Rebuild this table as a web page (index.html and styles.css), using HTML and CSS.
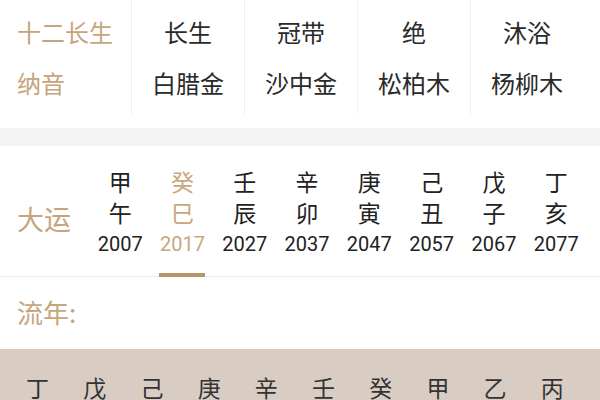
FILE: index.html
```html
<!DOCTYPE html>
<html lang="zh">
<head>
<meta charset="utf-8">
<link rel="stylesheet" href="styles.css">
</head>
<body>
<section class="grid">
  <div class="row">
    <div class="label">十二长生</div>
    <div class="cell">长生</div>
    <div class="cell">冠带</div>
    <div class="cell">绝</div>
    <div class="cell">沐浴</div>
  </div>
  <div class="row">
    <div class="label">纳音</div>
    <div class="cell">白腊金</div>
    <div class="cell">沙中金</div>
    <div class="cell">松柏木</div>
    <div class="cell">杨柳木</div>
  </div>
</section>
<div class="gap"></div>
<section class="dayun">
  <div class="dy-label">大运</div>
  <div class="pillars">
    <div class="pillar"><span>甲</span><span>午</span><span class="yr">2007</span></div>
    <div class="pillar active"><span>癸</span><span>巳</span><span class="yr">2017</span></div>
    <div class="pillar"><span>壬</span><span>辰</span><span class="yr">2027</span></div>
    <div class="pillar"><span>辛</span><span>卯</span><span class="yr">2037</span></div>
    <div class="pillar"><span>庚</span><span>寅</span><span class="yr">2047</span></div>
    <div class="pillar"><span>己</span><span>丑</span><span class="yr">2057</span></div>
    <div class="pillar"><span>戊</span><span>子</span><span class="yr">2067</span></div>
    <div class="pillar"><span>丁</span><span>亥</span><span class="yr">2077</span></div>
  </div>
</section>
<div class="liunian">流年:</div>
<section class="band">
  <span>丁</span><span>戊</span><span>己</span><span>庚</span><span>辛</span>
  <span>壬</span><span>癸</span><span>甲</span><span>乙</span><span>丙</span>
</section>
</body>
</html>
```
FILE: styles.css
```css
html, body {
  margin: 0;
  padding: 0;
  background: #fff;
}
body {
  width: 600px;
  height: 400px;
  overflow: hidden;
  font-family: "Noto Sans CJK SC", "Noto Sans", sans-serif;
  color: #222;
}
.grid {
  display: flex;
  flex-direction: column;
}
.row {
  display: grid;
  grid-template-columns: 131px 113px 113px 113px 113px;
}
.row:first-child {
  height: 58px;
}
.row:last-child {
  height: 56px;
}
.label {
  padding-left: 17px;
  font-size: 24px;
  color: #c6a57c;
  line-height: 49px;
}
.row:first-child .label,
.row:first-child .cell {
  padding-top: 7px;
}
.cell {
  border-left: 1px solid #f0f0f0;
  text-align: center;
  font-size: 24px;
  line-height: 49px;
  color: #2a2a2a;
}
.gap {
  margin-top: 14px;
  height: 18px;
  background: #f4f4f4;
}
.dayun {
  display: flex;
  align-items: center;
  border-bottom: 1px solid #ececec;
  height: 130px;
}
.dy-label {
  width: 72px;
  padding-left: 17px;
  padding-top: 14px;
  box-sizing: border-box;
  font-size: 27px;
  color: #c6a57c;
}
.pillars {
  display: grid;
  grid-template-columns: repeat(8, 62.3px);
  margin-left: 17px;
  align-self: stretch;
  padding-top: 20px;
}
.pillar {
  display: flex;
  flex-direction: column;
  align-items: center;
  font-size: 23px;
  line-height: 31px;
  position: relative;
}
.pillar .yr {
  font-family: "Roboto", "Liberation Sans", sans-serif;
  font-size: 20px;
  line-height: 33px;
  color: #222;
}
.pillar.active span {
  color: #c9a77e;
}
.pillar.active::after {
  content: "";
  position: absolute;
  left: 8px;
  right: 9px;
  bottom: -1px;
  height: 4px;
  background: #b8966b;
}
.liunian {
  height: 72px;
  padding-left: 17px;
  font-size: 26px;
  line-height: 70px;
  color: #c6a57c;
}
.band {
  background: #d9cdc3;
  height: 60px;
  display: grid;
  grid-template-columns: repeat(10, 57.2px);
  padding-left: 9px;
  padding-top: 23px;
  box-sizing: border-box;
}
.band span {
  text-align: center;
  font-size: 23px;
  line-height: 30px;
  color: #333;
}
```
